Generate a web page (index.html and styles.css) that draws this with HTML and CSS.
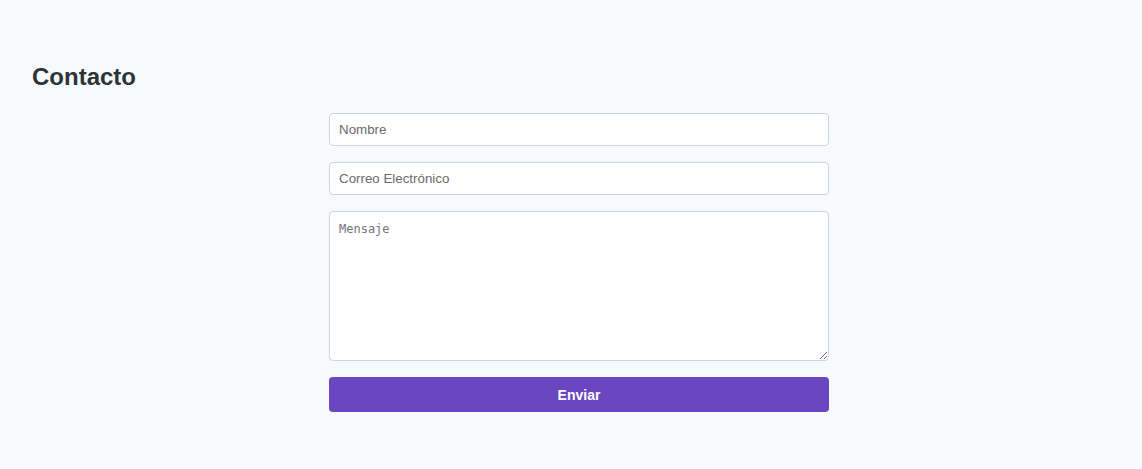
FILE: index.html
```html
<!DOCTYPE html>
<html lang="es">
<head>
<meta charset="utf-8">
<title>Contacto</title>
<link rel="stylesheet" href="styles.css">
</head>
<body>
<section class="contact">
  <h2 class="contact-title">Contacto</h2>
  <form class="contact-form">
    <input class="field" type="text" placeholder="Nombre">
    <input class="field" type="email" placeholder="Correo Electrónico">
    <textarea class="field field-area" placeholder="Mensaje"></textarea>
    <button class="submit" type="button">Enviar</button>
  </form>
</section>
</body>
</html>
```
FILE: styles.css
```css
html, body {
  margin: 0;
  padding: 0;
  background: #f7fafc;
  font-family: "Liberation Sans", Arial, sans-serif;
  color: #2d3436;
}

.contact {
  padding: 63px 16px 40px 32px;
}

.contact-title {
  margin: 0 0 22px 0;
  font-size: 24px;
  font-weight: bold;
  color: #2d3436;
}

.contact-form {
  width: 500px;
  margin: 0 auto;
  display: flex;
  flex-direction: column;
  gap: 16px;
}

.field {
  box-sizing: border-box;
  width: 100%;
  height: 33px;
  margin: 0;
  padding: 0 9px;
  border: 1px solid #cbd5e0;
  border-radius: 4px;
  background: #ffffff;
  font-family: "Liberation Sans", Arial, sans-serif;
  font-size: 13.33px;
  color: #2d3748;
  outline: none;
}

.field::placeholder {
  color: #6b6b6b;
}

.field-area {
  height: 150px;
  padding: 10px 9px;
  font-family: "DejaVu Sans Mono", monospace;
  font-size: 12px;
  line-height: 14px;
  resize: vertical;
}

.field-area::placeholder {
  color: #757575;
}

.submit {
  box-sizing: border-box;
  width: 100%;
  height: 35px;
  margin: 0;
  border: none;
  border-radius: 4px;
  background: #6b46c1;
  color: #ffffff;
  font-family: "Liberation Sans", Arial, sans-serif;
  font-size: 14px;
  font-weight: bold;
  cursor: pointer;
}
```
